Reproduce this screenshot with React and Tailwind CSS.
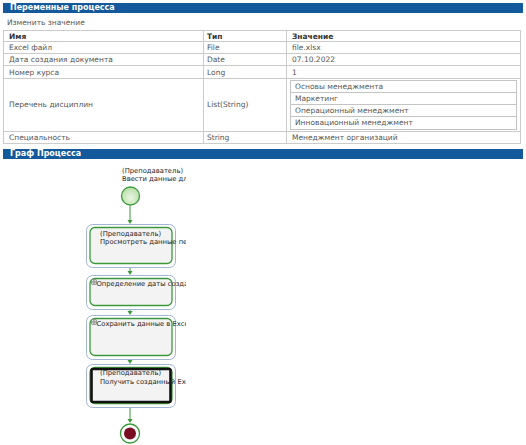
import React from "react";

const rows = [
  { name: "Excel файл", type: "File", value: "file.xlsx", h: "h-[12px]" },
  { name: "Дата создания документа", type: "Date", value: "07.10.2022", h: "h-[12px]" },
  { name: "Номер курса", type: "Long", value: "1", h: "h-[13px]" },
];

const disciplines = [
  "Основы менеджмента",
  "Маркетинг",
  "Операционный менеджмент",
  "Инновационный менеджмент",
];

const Arrow = ({ y1, y2 }) => (
  <g>
    <line x1="130" y1={y1} x2="130" y2={y2 - 2} stroke="#3a9a3a" strokeWidth="1" />
    <polygon points={`127.5,${y2 - 4} 132.5,${y2 - 4} 130,${y2}`} fill="#3a9a3a" />
  </g>
);

const Task = ({ y, h, icon, final }) => (
  <g>
    <rect x="86.5" y={y + 0.5} width="89" height={h} rx="6" fill="none" stroke="#a3b5d3" strokeWidth="1" />
    <rect x="90" y={y + 3.5} width="82" height={h - 7} rx="5" fill="#f3f3f3" stroke="#3a9a3a" strokeWidth="1.3" />
    {final && (
      <rect x="91.5" y={y + 5} width="79" height={h - 10} rx="1.5" fill="none" stroke="#111" strokeWidth="2.6" />
    )}
    {icon && (
      <g>
        <rect x="91.5" y={y + 4.5} width="5" height="5" rx="1" fill="#d8d8d8" stroke="#777" strokeWidth="0.7" />
        <circle cx="94" cy={y + 7} r="1.2" fill="none" stroke="#555" strokeWidth="0.6" />
      </g>
    )}
  </g>
);

const ProcessGraph = () => (
  <svg width="526" height="288" viewBox="0 157 526 288" className="block">
    <defs>
      <clipPath id="view">
        <rect x="0" y="157" width="186" height="288" />
      </clipPath>
      <radialGradient id="startFill" cx="50%" cy="60%" r="60%">
        <stop offset="0%" stopColor="#e8f6e2" />
        <stop offset="100%" stopColor="#b8dea8" />
      </radialGradient>
    </defs>

    <g clipPath="url(#view)" style={{ fontFamily: "'DejaVu Sans', sans-serif" }} fontSize="6.8" fill="#262626">
      <text x="122" y="170.5">(Преподаватель)</text>
      <text x="122" y="179">Ввести данные для создания документа</text>

      <Task y={222} h={43} />
      <Task y={273} h={34} icon />
      <Task y={313} h={44} icon />
      <Task y={362} h={43} final />

      <text x="100" y="233.5">(Преподаватель)</text>
      <text x="100" y="242">Просмотреть данные перед созданием</text>
      <text x="96.5" y="284">Определение даты создания</text>
      <text x="96.5" y="324">Сохранить данные в Excel</text>
      <text x="100" y="373">(Преподаватель)</text>
      <text x="100" y="381.5">Получить созданный Excel файл</text>
    </g>

    <circle cx="130.5" cy="194" r="9" fill="url(#startFill)" stroke="#3a9a3a" strokeWidth="1.3" />

    <Arrow y1={204} y2={222} />
    <Arrow y1={266} y2={273} />
    <Arrow y1={308} y2={313} />
    <Arrow y1={358} y2={362} />
    <Arrow y1={406} y2={421} />

    <circle cx="130" cy="431.5" r="9.5" fill="#fff" stroke="#3a9a3a" strokeWidth="1.3" />
    <circle cx="130" cy="431.5" r="6" fill="#7a0d22" />
  </svg>
);

export default function App() {
  return (
    <div className="w-[526px] h-[445px] bg-white overflow-hidden font-['DejaVu_Sans',sans-serif] text-[7.5px]">
      <div className="pt-[3px] px-[3px]">
        <div className="h-[10px] bg-[#13599b] text-white font-bold text-[8px] leading-[10px] pl-[7px]">
          Переменные процесса
        </div>
        <div className="mt-[5px] h-[10px] leading-[10px] pl-[4px] text-[#555]">Изменить значение</div>
        <table className="mt-[2px] w-[518px] border-collapse table-fixed text-[#555]">
          <colgroup>
            <col className="w-[200px]" />
            <col className="w-[83px]" />
            <col />
          </colgroup>
          <tbody>
            <tr className="h-[11px] font-bold text-[#333]">
              <td className="border border-[#cbcbcb] pl-[5px] py-0 leading-[9px]">Имя</td>
              <td className="border border-[#cbcbcb] pl-[3px] py-0 leading-[9px]">Тип</td>
              <td className="border border-[#cbcbcb] pl-[5px] py-0 leading-[9px]">Значение</td>
            </tr>
            {rows.map((r) => (
              <tr key={r.name} className={r.h}>
                <td className="border border-[#cbcbcb] pl-[5px] py-0 leading-[9px]">{r.name}</td>
                <td className="border border-[#cbcbcb] pl-[3px] py-0 leading-[9px]">{r.type}</td>
                <td className="border border-[#cbcbcb] pl-[5px] py-0 leading-[9px]">{r.value}</td>
              </tr>
            ))}
            <tr className="h-[51px]">
              <td className="border border-[#cbcbcb] pl-[5px] py-0">Перечень дисциплин</td>
              <td className="border border-[#cbcbcb] pl-[3px] py-0">List(String)</td>
              <td className="border border-[#cbcbcb] px-[3px] py-[1px]">
                <div className="border border-[#c4c4c4] flex flex-col">
                  {disciplines.map((d, i) => (
                    <div
                      key={d}
                      className={`h-[12px] leading-[11px] pl-[4px] border-[#c4c4c4] ${i < 3 ? "border-b" : ""}`}
                    >
                      {d}
                    </div>
                  ))}
                </div>
              </td>
            </tr>
            <tr className="h-[12px]">
              <td className="border border-[#cbcbcb] pl-[5px] py-0 leading-[9px]">Специальность</td>
              <td className="border border-[#cbcbcb] pl-[3px] py-0 leading-[9px]">String</td>
              <td className="border border-[#cbcbcb] pl-[5px] py-0 leading-[9px]">Менеджмент организаций</td>
            </tr>
          </tbody>
        </table>
        <div className="mt-[5px] h-[10px] bg-[#13599b] text-white font-bold text-[8px] leading-[10px] pl-[7px]">
          Граф Процесса
        </div>
      </div>
      <ProcessGraph />
    </div>
  );
}
